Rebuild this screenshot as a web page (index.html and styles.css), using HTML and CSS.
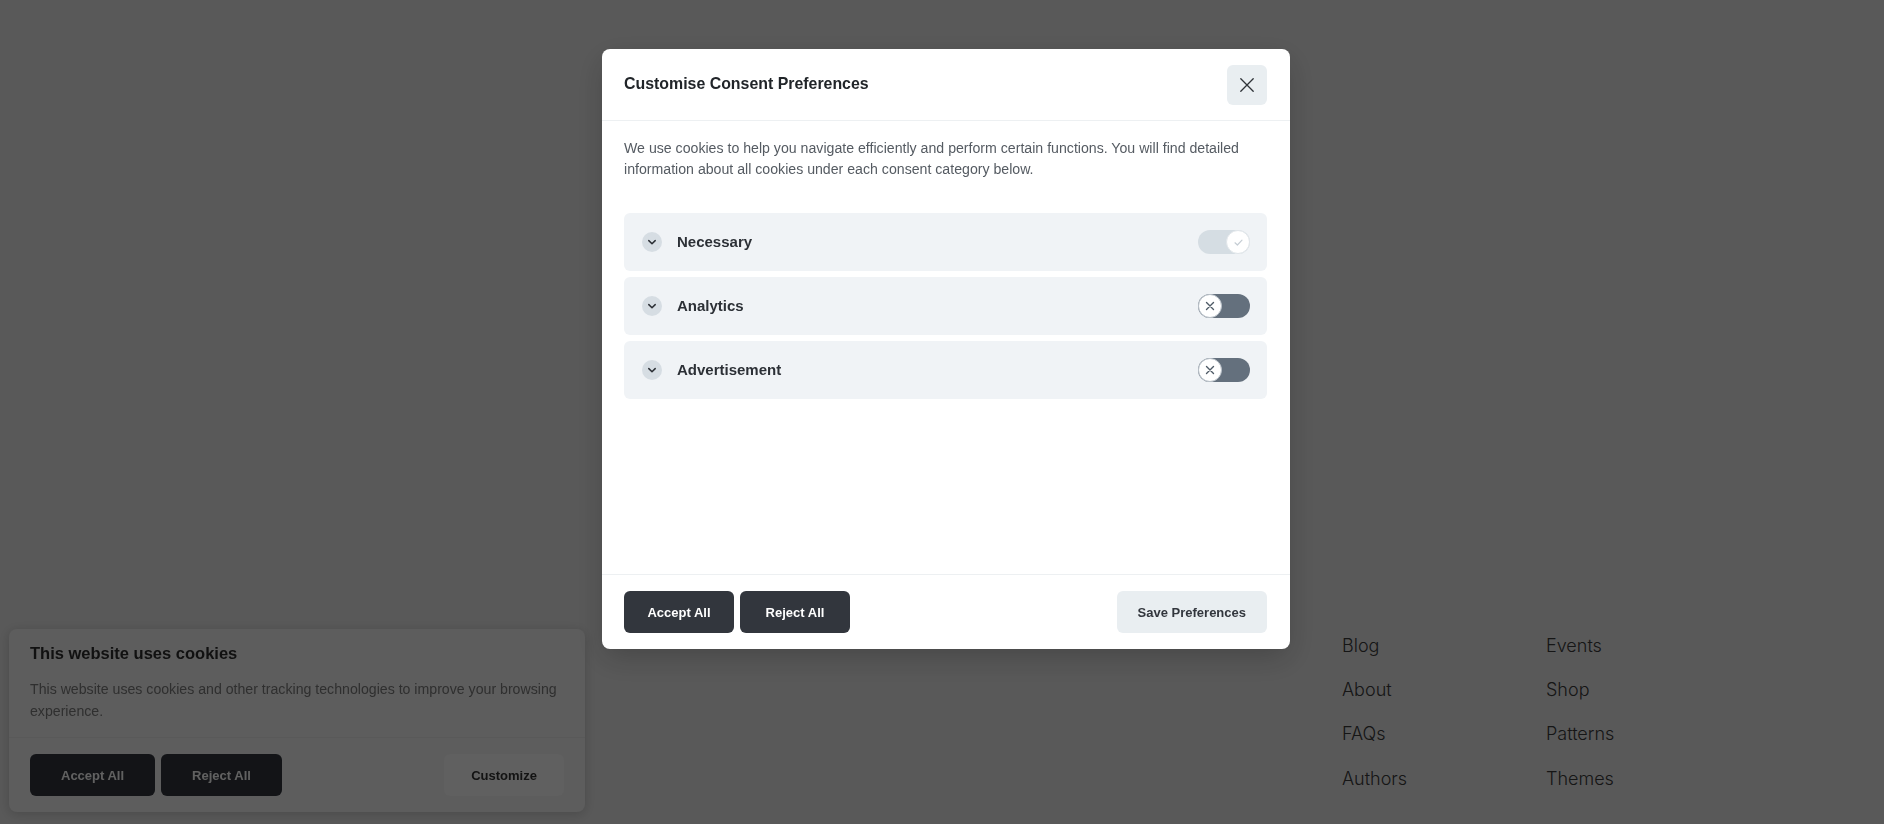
FILE: index.html
```html
<!DOCTYPE html>
<html lang="en">
<head>
<meta charset="utf-8">
<title>Customise Consent Preferences</title>
<link rel="stylesheet" href="styles.css">
</head>
<body>
<main class="page">
  <nav class="footer-links">
    <a href="#">Blog</a><a href="#">Events</a>
    <a href="#">About</a><a href="#">Shop</a>
    <a href="#">FAQs</a><a href="#">Patterns</a>
    <a href="#">Authors</a><a href="#">Themes</a>
  </nav>
</main>

<div class="banner">
  <div class="banner-main">
    <h2 class="banner-title">This website uses cookies</h2>
    <p class="banner-text">This website uses cookies and other tracking technologies to improve your browsing experience.</p>
  </div>
  <div class="banner-foot">
    <button class="btn btn-dark btn-wide">Accept All</button>
    <button class="btn btn-dark btn-wide">Reject All</button>
    <button class="btn btn-customize">Customize</button>
  </div>
</div>

<div class="overlay">
  <div class="modal">
    <div class="modal-head">
      <h2 class="modal-title">Customise Consent Preferences</h2>
      <button class="close" aria-label="Close">
        <svg width="14" height="14" viewBox="0 0 14 14"><path d="M0.8 0.8 L13.2 13.2 M13.2 0.8 L0.8 13.2" stroke="#2f3338" stroke-width="1.3" fill="none" stroke-linecap="round"/></svg>
      </button>
    </div>
    <div class="modal-body">
      <p class="intro">We use cookies to help you navigate efficiently and perform certain functions. You will find detailed information about all cookies under each consent category below.</p>
      <div class="cats">
        <div class="cat">
          <span class="chev"><svg width="10" height="10" viewBox="0 0 10 10"><path d="M1.8 3.6 L5 6.7 L8.2 3.6" stroke="#2c3036" stroke-width="1.5" fill="none" stroke-linecap="round" stroke-linejoin="round"/></svg></span>
          <span class="cat-name">Necessary</span>
          <span class="toggle on"><span class="knob"><svg width="11" height="11" viewBox="0 0 11 11"><path d="M2 5.8 L4.4 8 L9 3.2" stroke="#c5cdd4" stroke-width="1.2" fill="none" stroke-linecap="round" stroke-linejoin="round"/></svg></span></span>
        </div>
        <div class="cat">
          <span class="chev"><svg width="10" height="10" viewBox="0 0 10 10"><path d="M1.8 3.6 L5 6.7 L8.2 3.6" stroke="#2c3036" stroke-width="1.5" fill="none" stroke-linecap="round" stroke-linejoin="round"/></svg></span>
          <span class="cat-name">Analytics</span>
          <span class="toggle"><span class="knob"><svg width="10" height="10" viewBox="0 0 10 10"><path d="M1.5 1.5 L8.5 8.5 M8.5 1.5 L1.5 8.5" stroke="#4e5a66" stroke-width="1.4" fill="none" stroke-linecap="round"/></svg></span></span>
        </div>
        <div class="cat">
          <span class="chev"><svg width="10" height="10" viewBox="0 0 10 10"><path d="M1.8 3.6 L5 6.7 L8.2 3.6" stroke="#2c3036" stroke-width="1.5" fill="none" stroke-linecap="round" stroke-linejoin="round"/></svg></span>
          <span class="cat-name">Advertisement</span>
          <span class="toggle"><span class="knob"><svg width="10" height="10" viewBox="0 0 10 10"><path d="M1.5 1.5 L8.5 8.5 M8.5 1.5 L1.5 8.5" stroke="#4e5a66" stroke-width="1.4" fill="none" stroke-linecap="round"/></svg></span></span>
        </div>
      </div>
    </div>
    <div class="modal-foot">
      <button class="btn btn-dark">Accept All</button>
      <button class="btn btn-dark">Reject All</button>
      <button class="btn btn-light">Save Preferences</button>
    </div>
  </div>
</div>
</body>
</html>
```

FILE: styles.css
```css
html, body {
  margin: 0;
  height: 100%;
}
body {
  background: #eaeaea;
  overflow: hidden;
  font-family: "Liberation Sans", Arial, sans-serif;
}

/* page behind */
.page {
  box-sizing: border-box;
  height: 100vh;
  display: flex;
  align-items: flex-end;
  justify-content: flex-end;
  padding: 0 134px 23px 0;
}
.footer-links {
  display: grid;
  grid-template-columns: 204px 204px;
}
.footer-links a {
  font-family: Inter, "Liberation Sans", sans-serif;
  font-weight: 300;
  font-size: 18px;
  line-height: 44.3px;
  color: #3a3a3a;
  text-decoration: none;
}

/* cookie banner (behind overlay) */
.banner {
  position: fixed;
  left: 9px;
  bottom: 12px;
  width: 576px;
  background: #f3f3f3;
  border-radius: 8px;
  box-shadow: 0 2px 12px rgba(0, 0, 0, 0.18);
}
.banner-main {
  padding: 14px 21px 15px;
}
.banner-title {
  margin: 0 0 14px;
  font-size: 16.5px;
  line-height: 21px;
  font-weight: 700;
  color: #2e2e2e;
}
.banner-text {
  margin: 0;
  font-size: 14.15px;
  line-height: 22px;
  color: #7c7c7c;
}
.banner-foot {
  border-top: 1px solid #ebebeb;
  padding: 16px 21px;
  display: flex;
  gap: 6px;
}
.btn {
  box-sizing: border-box;
  height: 42px;
  min-width: 110px;
  padding: 0 21px;
  border: 0;
  border-radius: 6px;
  font-family: "Liberation Sans", Arial, sans-serif;
  font-size: 13px;
  font-weight: 700;
  cursor: pointer;
}
.btn-dark {
  background: #32363d;
  color: #fff;
}
.btn-wide {
  min-width: 120px;
  padding: 0 31px;
}
.btn-customize {
  margin-left: auto;
  min-width: 120px;
  padding: 0 27px;
  background: #fbfbfb;
  color: #333;
}

/* overlay + modal */
.overlay {
  position: fixed;
  inset: 0;
  background: rgba(0, 0, 0, 0.62);
  box-sizing: border-box;
  display: flex;
  justify-content: center;
  align-items: flex-start;
  padding: 49px 0 0 8px;
}
.modal {
  width: 688px;
  height: 600px;
  background: #fff;
  border-radius: 8px;
  box-shadow: 0 10px 30px rgba(0, 0, 0, 0.2);
  display: flex;
  flex-direction: column;
  overflow: hidden;
}
.modal-head {
  box-sizing: border-box;
  height: 72px;
  padding: 0 23px 0 22px;
  display: flex;
  align-items: center;
  justify-content: space-between;
  border-bottom: 1px solid #edf0f2;
}
.modal-title {
  margin: 0 0 2px;
  font-size: 15.9px;
  line-height: 20px;
  font-weight: 700;
  color: #212529;
}
.close {
  width: 40px;
  height: 40px;
  border: 0;
  border-radius: 6px;
  background: #e9eef1;
  display: flex;
  align-items: center;
  justify-content: center;
  padding: 0;
  cursor: pointer;
}
.modal-body {
  flex: 1;
  padding: 17px 23px 16px 22px;
}
.intro {
  margin: 0 0 33px;
  font-size: 14.15px;
  line-height: 21px;
  color: #555b62;
}
.cats {
  display: flex;
  flex-direction: column;
  gap: 6px;
}
.cat {
  box-sizing: border-box;
  height: 58px;
  padding: 0 17px 0 18px;
  background: #f0f3f6;
  border-radius: 6px;
  display: flex;
  align-items: center;
}
.chev {
  width: 20px;
  height: 20px;
  border-radius: 50%;
  background: #d6dde3;
  display: flex;
  align-items: center;
  justify-content: center;
  margin-right: 15px;
}
.cat-name {
  flex: 1;
  margin-bottom: 2px;
  font-size: 15px;
  font-weight: 700;
  color: #2c3036;
}
.toggle {
  position: relative;
  width: 52px;
  height: 24px;
  border-radius: 12px;
  background: #64707d;
}
.toggle.on {
  background: #d5dde3;
}
.knob {
  position: absolute;
  top: 0;
  left: 0;
  box-sizing: border-box;
  width: 24px;
  height: 24px;
  border-radius: 50%;
  border: 1px solid #b9c1c9;
  background: #fff;
  display: flex;
  align-items: center;
  justify-content: center;
}
.toggle.on .knob {
  left: auto;
  right: 0;
  border-color: #e1e6ea;
}
.modal-foot {
  border-top: 1px solid #edf0f2;
  padding: 16px 23px 16px 22px;
  display: flex;
  gap: 6px;
}
.btn-light {
  margin-left: auto;
  background: #e9eef1;
  color: #32363d;
}
```
